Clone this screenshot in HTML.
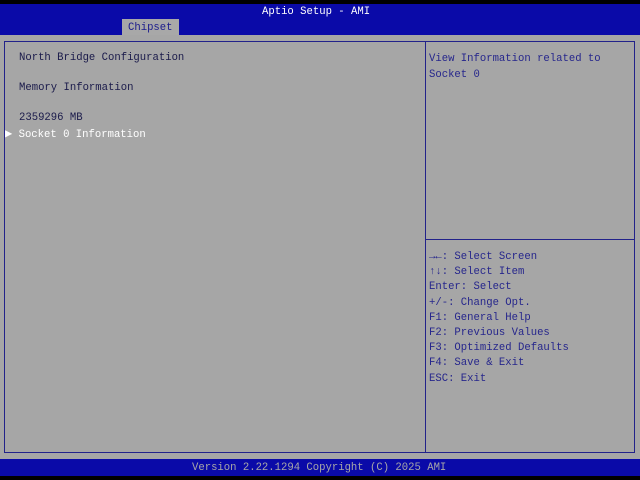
<!DOCTYPE html>
<html><head><style>
html,body{margin:0;padding:0;width:640px;height:480px;overflow:hidden;background:#000;}
body{position:relative;font-family:"Liberation Mono","DejaVu Sans Mono",monospace;font-size:10.6px;}
.a{position:absolute;}
.t{position:absolute;white-space:pre;line-height:13px;}
</style></head><body>
<div class="a" style="left:0;top:4px;width:640px;height:31px;background:#0a0aa8;"></div>
<div class="t" style="left:262px;top:6px;color:#fff;">Aptio Setup - AMI</div>
<div class="a" style="left:122px;top:19px;width:57px;height:16px;background:#a8a8a8;"></div>
<div class="t" style="left:128px;top:22px;color:#1c1c8c;">Chipset</div>
<div class="a" style="left:0;top:35px;width:640px;height:424px;background:#a6a6a6;"></div>
<div class="a" style="left:4px;top:41px;width:629px;height:410px;border:1px solid #22228a;"></div>
<div class="a" style="left:425px;top:41px;width:1px;height:411px;background:#22228a;"></div>
<div class="a" style="left:426px;top:239px;width:208px;height:1px;background:#22228a;"></div>
<div class="t" style="left:19px;top:52px;color:#1a1a4a;">North Bridge Configuration</div>
<div class="t" style="left:19px;top:82px;color:#1a1a4a;">Memory Information</div>
<div class="t" style="left:19px;top:112px;color:#1a1a4a;">2359296 MB</div>
<div class="t" style="left:5px;top:128px;color:#fff;"><span style="font-size:12px">▶</span> Socket 0 Information</div>
<div class="t" style="left:429px;top:52px;color:#26268c;line-height:15.5px;">View Information related to
Socket 0</div>
<div class="t" style="left:429px;top:250px;color:#26268c;line-height:15.2px;"><b>→←</b>: Select Screen
<b>↑↓</b>: Select Item
Enter: Select
+/-: Change Opt.
F1: General Help
F2: Previous Values
F3: Optimized Defaults
F4: Save &amp; Exit
ESC: Exit</div>
<div class="a" style="left:0;top:459px;width:640px;height:17px;background:#0a0aa8;"></div>
<div class="t" style="left:192px;top:462px;color:#a8a8a8;">Version 2.22.1294 Copyright (C) 2025 AMI</div>
</body></html>
